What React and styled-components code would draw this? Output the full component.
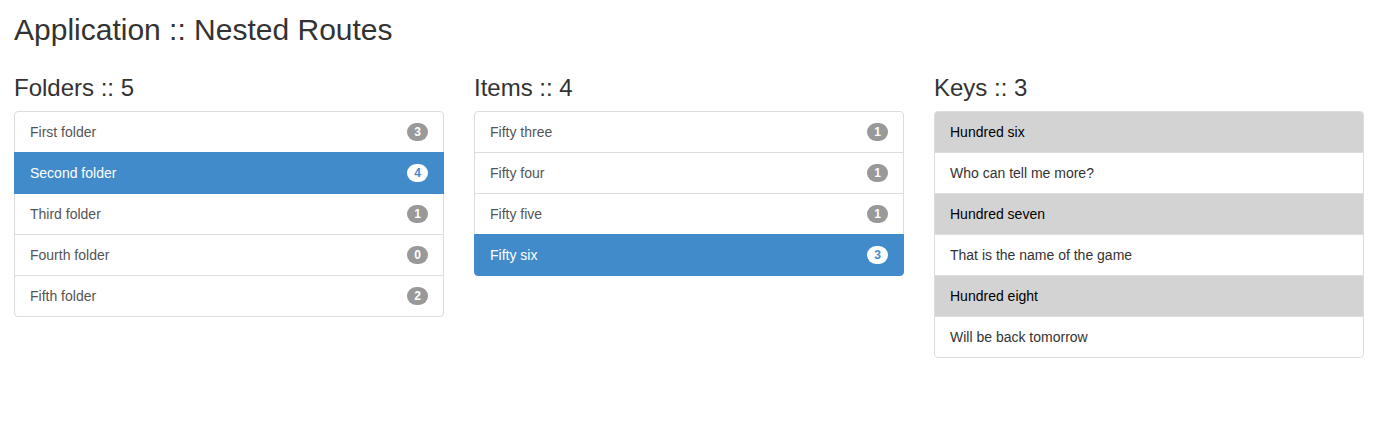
import React from 'react'
import styled, { createGlobalStyle } from 'styled-components'

const GlobalStyle = createGlobalStyle`
  * {
    box-sizing: border-box;
  }
  body {
    margin: 0;
    background: #fff;
    font-family: "Liberation Sans", Arial, sans-serif;
    font-size: 14px;
    color: #333;
  }
`

const Page = styled.div`
  padding: 0 13px 0 14px;
`

const Title = styled.h1`
  margin: 13px 0 0;
  font-size: 30px;
  font-weight: 500;
  line-height: 33px;
  color: #333;
`

const Columns = styled.div`
  display: grid;
  grid-template-columns: repeat(3, 1fr);
  gap: 30px;
  margin-top: 29px;
`

const Heading = styled.h3`
  margin: 0 0 10px;
  font-size: 24px;
  font-weight: 500;
  line-height: 26px;
  color: #333;
`

const List = styled.div`
  display: flex;
  flex-direction: column;
`

const Item = styled.div`
  display: flex;
  align-items: center;
  justify-content: space-between;
  padding: 10px 15px;
  line-height: 20px;
  margin-bottom: -1px;
  border: 1px solid ${p => (p.$active ? '#428bca' : '#ddd')};
  background: ${p => (p.$active ? '#428bca' : p.$shaded ? '#d3d3d3' : '#fff')};
  color: ${p => (p.$active ? '#fff' : p.$shaded ? '#000' : p.$plain ? '#333' : '#555')};
  position: relative;
  z-index: ${p => (p.$active ? 2 : 1)};

  &:first-child {
    border-top-left-radius: 4px;
    border-top-right-radius: 4px;
  }
  &:last-child {
    margin-bottom: 0;
    border-bottom-left-radius: 4px;
    border-bottom-right-radius: 4px;
  }
`

const Badge = styled.span`
  display: inline-block;
  min-width: 10px;
  padding: 3px 7px;
  font-size: 12px;
  font-weight: bold;
  line-height: 1;
  text-align: center;
  border-radius: 10px;
  background: ${p => (p.$active ? '#fff' : '#999')};
  color: ${p => (p.$active ? '#428bca' : '#fff')};
`

const folders = [
  { name: 'First folder', count: 3 },
  { name: 'Second folder', count: 4, active: true },
  { name: 'Third folder', count: 1 },
  { name: 'Fourth folder', count: 0 },
  { name: 'Fifth folder', count: 2 },
]

const items = [
  { name: 'Fifty three', count: 1 },
  { name: 'Fifty four', count: 1 },
  { name: 'Fifty five', count: 1 },
  { name: 'Fifty six', count: 3, active: true },
]

const keys = [
  { key: 'Hundred six', value: 'Who can tell me more?' },
  { key: 'Hundred seven', value: 'That is the name of the game' },
  { key: 'Hundred eight', value: 'Will be back tomorrow' },
]

function CountList({ rows }) {
  return (
    <List>
      {rows.map(r => (
        <Item key={r.name} $active={r.active}>
          <span>{r.name}</span>
          <Badge $active={r.active}>{r.count}</Badge>
        </Item>
      ))}
    </List>
  )
}

export default function App() {
  return (
    <>
      <GlobalStyle />
      <Page>
        <Title>Application :: Nested Routes</Title>
        <Columns>
          <div>
            <Heading>Folders :: {folders.length}</Heading>
            <CountList rows={folders} />
          </div>
          <div>
            <Heading>Items :: {items.length}</Heading>
            <CountList rows={items} />
          </div>
          <div>
            <Heading>Keys :: {keys.length}</Heading>
            <List>
              {keys.map(k => (
                <React.Fragment key={k.key}>
                  <Item $shaded>{k.key}</Item>
                  <Item $plain>{k.value}</Item>
                </React.Fragment>
              ))}
            </List>
          </div>
        </Columns>
      </Page>
    </>
  )
}
